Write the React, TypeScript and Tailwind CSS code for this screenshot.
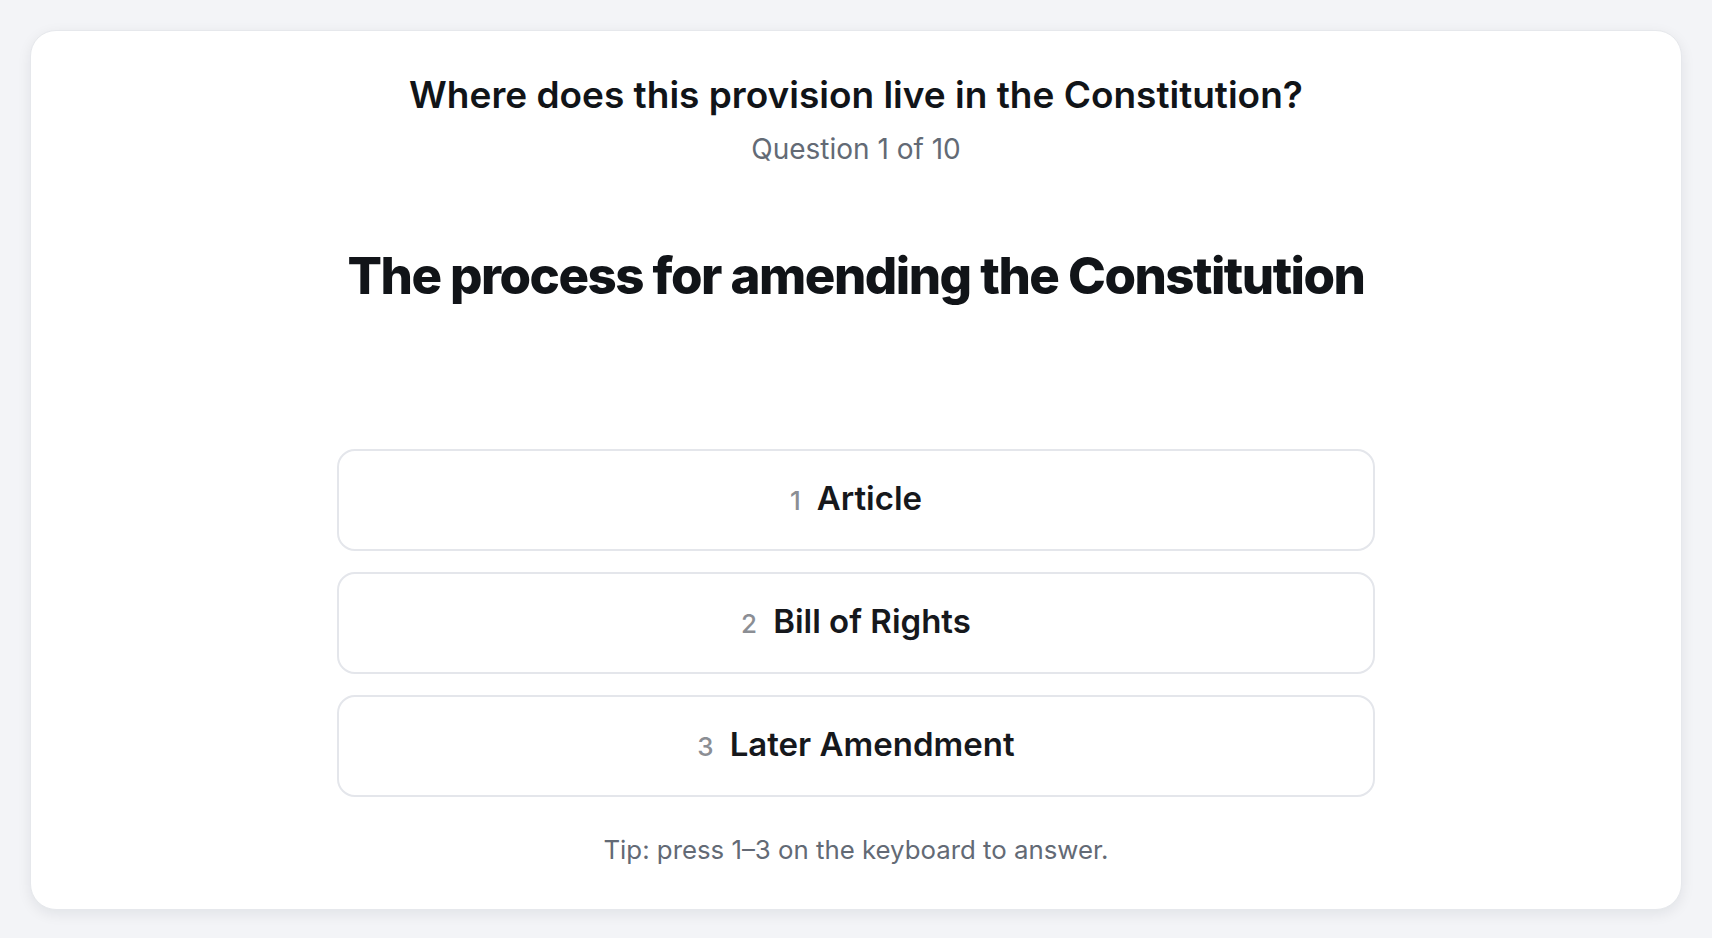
const options = ['Article', 'Bill of Rights', 'Later Amendment'];

export default function App() {
  return (
    <div
      className="min-h-screen bg-[#f3f4f7] p-[30px]"
      style={{ fontFamily: 'Inter, "Noto Sans", sans-serif' }}
    >
      <div className="flex flex-col items-center rounded-[26px] border border-[#e6e8ec] bg-white px-10 pt-[41px] pb-[43px] shadow-[0_4px_14px_rgba(15,23,42,0.08)]">
        <h1 className="text-[37px] leading-[45px] font-semibold text-[#111418]">
          Where does this provision live in the Constitution?
        </h1>
        <p className="mt-[14px] text-[28px] leading-[36px] text-[#636a75]">Question 1 of 10</p>

        <h2 className="mt-[79px] text-[51px] leading-[60px] font-extrabold tracking-[-0.03em] text-[#111418]">
          The process for amending the Constitution
        </h2>

        <div className="mt-[143px] flex w-full max-w-[1038px] flex-col gap-[21px]">
          {options.map((label, i) => (
            <button
              key={label}
              className="flex h-[102px] w-full items-baseline justify-center gap-4 rounded-[18px] border-2 border-[#e4e6eb] bg-white pt-[23px]"
            >
              <span className="text-[26px] font-medium text-[#8b8e94]">{i + 1}</span>
              <span className="text-[33px] font-semibold text-[#16181c]">{label}</span>
            </button>
          ))}
        </div>

        <p className="mt-[37px] text-[25.8px] leading-[32px] text-[#636a75]">
          Tip: press 1–3 on the keyboard to answer.
        </p>
      </div>
    </div>
  );
}
